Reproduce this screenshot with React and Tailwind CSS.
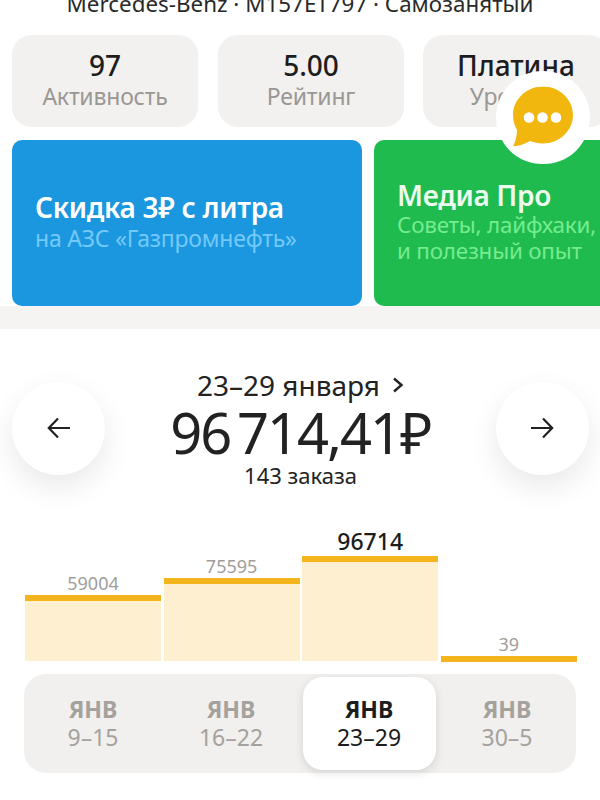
const F = { fontFamily: '"Noto Sans", "Open Sans", sans-serif' };

function Stat({ value, label, className = "" }) {
  return (
    <div className={`w-[186px] h-[92px] shrink-0 rounded-[20px] bg-[#f3f1ef] flex flex-col items-center pt-[11px] ${className}`}>
      <div className="text-[28px] leading-[38px] font-medium text-[#1d1d1d]">{value}</div>
      <div className="text-[23px] leading-[24px] text-[#9a9794] tracking-[-0.2px]">{label}</div>
    </div>
  );
}

function Arrow({ dir }) {
  return (
    <div className="w-[93px] h-[93px] rounded-full bg-white shadow-[0_12px_30px_rgba(0,0,0,0.09)] flex items-center justify-center shrink-0">
      <svg width="26" height="26" viewBox="0 0 26 26" fill="none" stroke="#222" strokeWidth="2.2" className={dir === "right" ? "rotate-180" : ""}>
        <path d="M24 13H3M12 3.5L2.8 13l9.2 9.5" />
      </svg>
    </div>
  );
}

function Bar({ h, value, active }) {
  return (
    <div className="w-[136px] flex flex-col items-center">
      <div className={active ? "text-[23px] leading-[28px] font-medium text-[#1d1d1d] mb-[1px]" : "text-[18px] leading-[22px] text-[#a09d9a] mb-[1px]"}>{value}</div>
      <div className="w-full bg-[#fdefd0]" style={{ height: h }}>
        <div className="h-[6px] bg-[#f4b41c]" />
      </div>
    </div>
  );
}

function Tab({ value, active }) {
  return (
    <div className="flex-1 flex justify-center">
      <div className={`w-[133px] h-[93px] rounded-[20px] flex flex-col items-center justify-center ${active ? "bg-white shadow-[0_3px_10px_rgba(0,0,0,0.12)]" : ""}`}>
        <div className={`text-[23px] leading-[27px] font-bold ${active ? "text-[#1d1d1d]" : "text-[#a5a19d]"}`}>ЯНВ</div>
        <div className={`text-[23px] leading-[28px] ${active ? "text-[#1d1d1d]" : "text-[#a5a19d]"}`}>{value}</div>
      </div>
    </div>
  );
}

export default function App() {
  return (
    <div className="relative w-[600px] h-[800px] overflow-hidden bg-white" style={F}>
      <div className="h-[35px] flex items-end justify-center pb-[19px] text-[22.4px] leading-[24px] text-[#2a2a2a] whitespace-nowrap">
        Mercedes-Benz · М157ЕТ797 · Самозанятый
      </div>

      <div className="flex gap-[20px] pl-[12px]">
        <Stat value="97" label="Активность" />
        <Stat value="5.00" label="Рейтинг" />
        <Stat value="Платина" label="Уровень" className="-ml-[1px]" />
      </div>

      <div className="flex gap-[12px] pl-[12px] mt-[13px]">
        <div className="w-[350px] h-[166px] shrink-0 rounded-[10px] bg-[#1b97e0] flex flex-col justify-center pl-[23px] pb-[4px]">
          <div className="text-[28px] leading-[34px] font-semibold text-white tracking-[-0.3px] whitespace-nowrap">Скидка 3₽ с литра</div>
          <div className="text-[23px] leading-[28px] text-[#74c9f8] tracking-[-0.2px] whitespace-nowrap">на АЗС «Газпромнефть»</div>
        </div>
        <div className="w-[300px] h-[166px] shrink-0 rounded-[10px] bg-[#1fbb4f] flex flex-col justify-center pl-[23px] pb-[4px]">
          <div className="text-[28px] leading-[34px] font-semibold text-[#ecfbee] tracking-[-0.3px] whitespace-nowrap">Медиа Про</div>
          <div className="text-[22.4px] leading-[26px] text-[#76ec8f] tracking-[-0.2px] whitespace-nowrap">Советы, лайфхаки,<br />и полезный опыт</div>
        </div>
      </div>

      <div className="h-[23px] bg-[#f5f4f2]" />

      <div className="flex items-center justify-between pl-[12px] pr-[11px] pt-[38px]">
        <Arrow dir="left" />
        <div className="flex flex-col items-center mt-[2px] text-[#222]">
          <div className="flex items-center gap-[12px] text-[28px] leading-[32px] whitespace-nowrap">
            <span>23–29 января</span>
            <svg width="12" height="16" viewBox="0 0 12 16" fill="none" stroke="#222" strokeWidth="2.4"><path d="M2 1.5L9.500 8 2 14.500" /></svg>
          </div>
          <div className="mt-[2px] text-[56px] leading-[58px] tracking-[-2px] [word-spacing:-6px] whitespace-nowrap">96 714,41₽</div>
          <div className="text-[22px] leading-[28px] whitespace-nowrap">143 заказа</div>
        </div>
        <Arrow dir="right" />
      </div>

      <div className="flex items-end gap-[2.6px] h-[134px] ml-[25px] mr-[23px] mt-[38px]">
        <Bar h={66} value="59004" />
        <Bar h={83} value="75595" />
        <Bar h={105} value="96714" active />
        <Bar h={5} value="39" />
      </div>

      <div className="flex items-center mx-[24px] mt-[13px] h-[99px] rounded-[22px] bg-[#f1f0ee]">
        <Tab value="9–15" />
        <Tab value="16–22" />
        <Tab value="23–29" active />
        <Tab value="30–5" />
      </div>

      <div className="absolute left-[496px] top-[71px] w-[94px] h-[93px] rounded-full bg-white flex items-center justify-center">
        <svg width="60" height="60" viewBox="0 0 60 60" className="-translate-y-[1.5px]">
          <path d="M30 0C13.400 0 0 13 0 28.500C0 34 1.500 39 4 43.500C4 49 2.500 55 0 60C6 59.500 12 57.500 17 54.500C21 56 25.500 57 30 57C46.600 57 60 44 60 28.500C60 13 46.600 0 30 0Z" fill="#f2b70f" />
          <circle cx="16" cy="31" r="5.300" fill="#fff" />
          <circle cx="29.500" cy="31" r="5.300" fill="#fff" />
          <circle cx="43" cy="31" r="5.300" fill="#fff" />
        </svg>
      </div>
    </div>
  );
}
